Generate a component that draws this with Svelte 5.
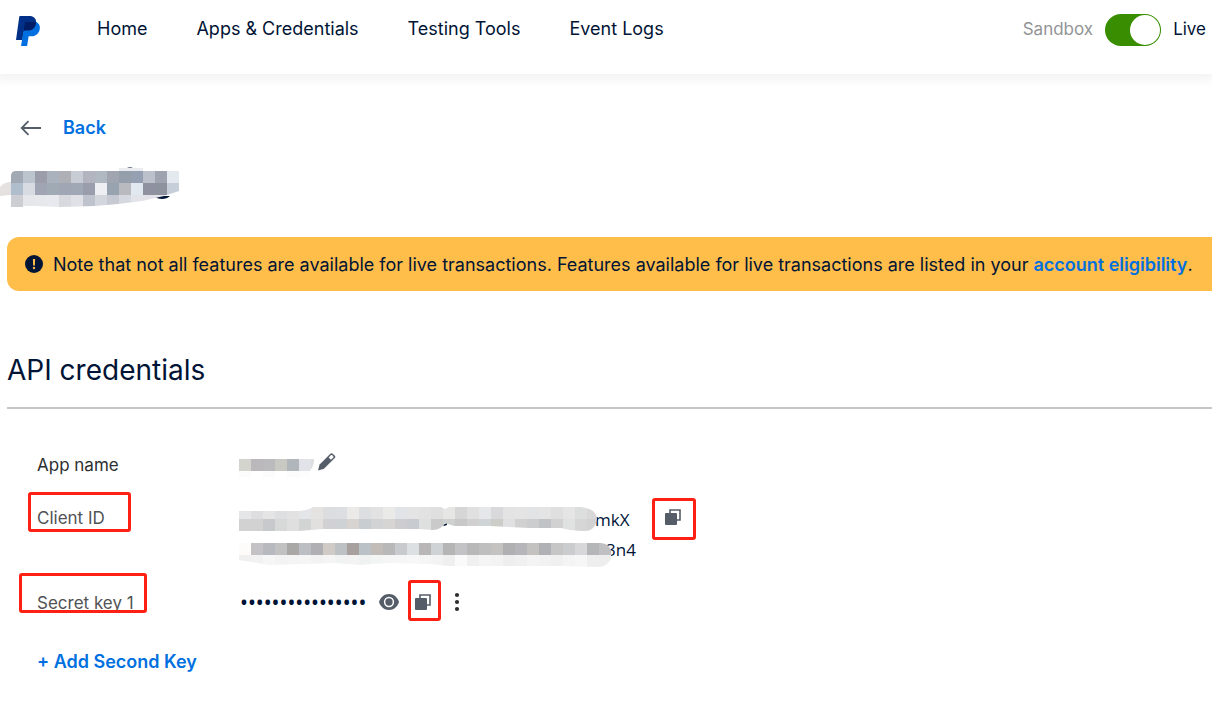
<script>
  let live = $state(true);

  const nav = ['Home', 'Apps & Credentials', 'Testing Tools', 'Event Logs'];

  const titleRows = [
    '#a1a9b5 #bcc5ce #9b9dab #a9b2bd #aeb0b6 #c8ccd4 #b2b5bf #b0b8c2 #a0a5b0 #959eab #95a1b2 #bcc0ca #9fa3b0 #e3e9ef',
    '#b0bdcc #d8dbe1 #a1a5b3 #a0aab5 #a1a6b4 #9fa8b4 #9a9eac #eeeff2 #98a3b0 #b9babf #e2e8ef #9091a0 #8e929f #c5ced9',
    '#cdced4 #e5e7eb #e7e8ec #e8e9ee #d8d9de #dfe1e6 #bfc3cd #d3d6dd #c6c9d2 #d6d8df #e2e4ea #e2e2e8 #e6e6ea #e3e6ea'
  ];
  const nameRows = [
    '#d3d4ce #bab8bb #bbbabd #c9c9c4 #b1b6bb #e2e3e9 #dcdee0',
    '#fcfcfc #ffffff #fcfcfc #ffffff #fcfcfc #fdfdfd #ffffff'
  ];
  const idRows = [
    '#e5e6e7 #dedddf #e5e5e6 #dedfe0 #e2e2e2 #e3e5e8 #e5e3e2 #dcddde #dddee1 #ebeae9 #dcdee0 #e2e2e2 #eaeae8 #e0e4e8 #e4e4e4 #e2e2e2 #e0dfdf #e6e6e5 #d6d6d7 #e0e0e1 #e6e7e8 #d9d9db #e3e3e4 #e4e4e4 #e2e3e4 #e4e4e5 #dfdfdf #e5e5e5 #dcdddd #d8d8d9',
    '#d2d2d2 #d2d2d2 #c7c9cc #d7d9d8 #dfdfdf #d2d4d4 #e1e0df #d1d0d2 #cfd2d5 #d7d3d1 #c8cdd1 #d2d3d4 #d7d5d3 #cdcdd0 #c8cbcf #dedfdf #cbcaca #cecfcf #c8c8c8 #d0d0d0 #cfd4d6 #ccccc9 #e0e0e2 #d1d1d2 #cccdce #bfc3c5 #d1d1d1 #e0e1e1 #d6d6d6 #d2d2d2'
  ];
  const extraRows = [
    '#fdfcfb #c4c2c5 #b7b9be #c1c1c2 #a9a8a7 #bbbfc3 #b0afb3 #d1cbc7 #bdc1c4 #a7a09f #bac2c7 #c2bcb9 #b8b8b9 #c9cacd #dde0e2 #b9b6b7 #cfd3d5 #b5b5b5 #c3c3c5 #b8b8b8 #bfbfbf #c4c3c2 #b0afb2 #b6b6ba #c3c2c0 #b0b1b4 #c6c6c7 #cacccd #d7d7d9 #b4b6b7 #c0c0c3',
    '#f0f0f0 #f2f2f2 #f6f6f6 #f3f3f3 #f4f4f4 #f5f5f5 #f2f2f2 #f5f5f5 #f1f2f2 #f3f3f3 #f0f2f2 #f3f4f4 #f5f5f5 #f6f6f6 #f7f7f7 #f5f5f5 #f3f3f3 #efefef #fafafa #f0f0f0 #f5f5f5 #f3f3f3 #eeeeee #f0f0f0 #f4f4f4 #f2f2f2 #f0f0f0 #f4f4f4 #f6f6f6 #eeeeee #ededed'
  ];
</script>

{#snippet cells(rows, x, y)}
  {#each rows as row, r}
    {#each row.split(' ') as fill, c}
      <rect x={x + c * 12} y={y + r * 12} width="12" height="12" {fill} />
    {/each}
  {/each}
{/snippet}

{#snippet copyIcon()}
  <svg width="16" height="16" viewBox="0 0 16 16" aria-hidden="true">
    <path d="M5 4V1h10v10h-3" fill="none" stroke="#545d68" stroke-width="1.6" />
    <rect x="0" y="4" width="12" height="12" rx="1" fill="#545d68" />
  </svg>
{/snippet}

<header>
  <a class="logo" href="#home" aria-label="PayPal">
    <svg width="24" height="30" viewBox="0 0 24 30" aria-hidden="true">
      <path fill="#003087" d="M4 0H13.500C17.500 0 20.300 2.500 20.200 6.500C19.800 11.500 16.500 15 12 15H8L6.400 24H0L3.300.600Q3.400 0 4 0Z" />
      <path fill="#0070e0" d="M9 6H20.200C22.500 7.200 24 9 23.900 12C23.600 17 20 20.300 15.500 20.300H12.600L11.200 29.400Q11 30 10.500 30H5Z" />
      <path fill="#001c64" d="M9.500 6H20.200C20 11.200 16.800 14.600 12 14.600H9.500Q8 14.600 7.500 16L8.500 7Q8.700 6 9.500 6Z" />
    </svg>
  </a>
  <nav>
    {#each nav as item}
      <a href="#{item.split(' ')[0].toLowerCase()}">{item}</a>
    {/each}
  </nav>
  <div class="mode">
    <span class="off">Sandbox</span>
    <input id="mode" type="checkbox" role="switch" bind:checked={live} />
    <label for="mode">Live</label>
  </div>
</header>

<main>
  <a class="back" href="#apps">
    <svg width="22" height="16" viewBox="0 0 22 16" fill="none" stroke="#545d68" stroke-width="1.8" aria-hidden="true">
      <path d="M21 8H2M8.500 1.200L1.700 8L8.500 14.800" />
    </svg>
    Back
  </a>

  <svg class="title" width="180" height="42" viewBox="0 0 180 42" aria-hidden="true">
    <defs>
      <clipPath id="title-shape">
        <path d="M11 9Q11 4 16 4H179V24L164 29L142 34L118 37L95 39L60 40L35 39L23 39V40H11Z" />
      </clipPath>
    </defs>
    <path d="M0 29V20Q4 15 11 15V28Z" fill="#e5e1e0" />
    <path d="M119 1H143V5H119Z" fill="#ebecef" />
    <path d="M127 1Q130-1 133 1Z" fill="#66718a" />
    <path d="M157 29H170Q167 32 162 32Q158 32 155 30Z" fill="#001435" />
    <g clip-path="url(#title-shape)">{@render cells(titleRows, 11, 4)}</g>
  </svg>

  <div class="notice" role="note">
    <svg width="18" height="18" viewBox="0 0 18 18" aria-hidden="true">
      <circle cx="9" cy="9" r="9" fill="#001435" />
      <path d="M7.900 4H10.100L9.900 10.500H8.100Z" fill="#ffbd4a" />
      <circle cx="9" cy="13" r="1.200" fill="#ffbd4a" />
    </svg>
    <p>Note that not all features are available for live transactions. Features available for live transactions are listed in your <a href="#eligibility">account eligibility</a>.</p>
  </div>

  <h1>API credentials</h1>

  <dl>
    <div class="row name">
      <dt>App name</dt>
      <dd>
        <svg width="75" height="24" viewBox="0 0 75 24" aria-hidden="true">
          <defs><clipPath id="name-shape"><path d="M0 0H72Q75 3 75 7Q75 12 71 18V24H0Z" /></clipPath></defs>
          <g clip-path="url(#name-shape)">{@render cells(nameRows, 0, 6)}</g>
        </svg>
        <button aria-label="Edit app name">
          <svg width="18" height="18" viewBox="0 0 18 18" aria-hidden="true">
            <path fill="#545d68" d="M0 17.500L1.600 11.400L12.400.700Q13.600-.300 14.800.700L16.800 2.700Q17.800 3.900 16.800 5L6 15.800Z" />
            <path fill="#fff" d="M10.700 4.500L13.100 2.100Q13.600 1.700 14.100 2.100L15.400 3.400Q15.800 3.900 15.400 4.400L13 6.800Z" />
          </svg>
        </button>
      </dd>
    </div>

    <div class="row client">
      <dt><span class="marked">Client ID<i class="mark client-mark"></i></span></dt>
      <dd>
        <div class="value">
          <div class="line">
            <svg width="358" height="30" viewBox="0 0 358 30" aria-hidden="true">
              <defs>
                <clipPath id="id-shape">
                  <path d="M0 6H60Q68 6 74 2H202L206 4L210 2H342Q358 4 358 14Q356 26 346 26Q332 26 322 23L290 23L250 21L215 21L206 18Q202 25 194 25L180 24H84L60 26H0Z" />
                </clipPath>
              </defs>
              <path d="M204 20L208 18V20L205 21Z" fill="#001435" />
              <g clip-path="url(#id-shape)">{@render cells(idRows, 0, 2)}</g>
            </svg>
            <span>mkX</span>
          </div>
          <div class="line second">
            <svg width="372" height="30" viewBox="0 0 372 30" aria-hidden="true">
              <defs>
                <clipPath id="extra-shape">
                  <path d="M0 8H362Q372 9 373 19Q371 32 358 32L320 31H210L190 29L150 28L120 30L96 28L30 30L0 25Z" />
                </clipPath>
              </defs>
              <g clip-path="url(#extra-shape)">{@render cells(extraRows, 0, 8)}</g>
            </svg>
            <span>3n4</span>
          </div>
        </div>
        <button class="marked" aria-label="Copy client ID">{@render copyIcon()}<i class="mark copy-mark"></i></button>
      </dd>
    </div>

    <div class="row secret">
      <dt><span class="marked">Secret key 1<i class="mark secret-mark"></i></span></dt>
      <dd>
        <span class="dots">••••••••••••••••</span>
        <button aria-label="Show secret key">
          <svg width="20" height="16" viewBox="0 0 20 16" aria-hidden="true">
            <path fill="#545d68" d="M10 0C15 0 18.500 3.500 20 8C18.500 12.500 15 16 10 16S1.500 12.500 0 8C1.500 3.500 5 0 10 0Z" />
            <circle cx="10" cy="8" r="4.400" fill="#545d68" stroke="#fff" stroke-width="1.500" />
          </svg>
        </button>
        <button class="marked" aria-label="Copy secret key">{@render copyIcon()}<i class="mark key-mark"></i></button>
        <button class="more" aria-label="More options">
          <svg width="6" height="20" viewBox="0 0 6 20" fill="#2c2e2f" aria-hidden="true">
            <circle cx="3" cy="3" r="2.100" /><circle cx="3" cy="10" r="2.100" /><circle cx="3" cy="17" r="2.100" />
          </svg>
        </button>
      </dd>
    </div>
  </dl>

  <button class="add">+ Add Second Key</button>
</main>

<style>
  :global(body) {
    margin: 0;
    background: #fff;
    overflow-x: hidden;
    font-family: Inter, 'Liberation Sans', sans-serif;
    font-size: 17px;
    line-height: 24px;
    color: #001435;
  }
  a {
    color: inherit;
    text-decoration: none;
  }
  svg {
    display: block;
    flex: none;
  }
  button {
    display: flex;
    padding: 0;
    border: 0;
    background: none;
    font: inherit;
    cursor: pointer;
  }
  header {
    display: flex;
    align-items: flex-start;
    box-sizing: border-box;
    height: 74px;
    padding: 14px 6px 0 16px;
    box-shadow: 0 2px 10px 4px rgba(0, 0, 0, 0.05);
  }
  .logo {
    padding-top: 2px;
    margin-right: 57px;
  }
  nav {
    display: flex;
    flex: 1;
    gap: 49px;
    font-size: 18px;
    line-height: 30px;
    white-space: nowrap;
  }
  .mode {
    display: flex;
    gap: 12px;
    line-height: 30px;
  }
  .off {
    color: #929496;
  }
  .mode input {
    appearance: none;
    display: flex;
    width: 56px;
    height: 32px;
    margin: 0;
    padding: 1px;
    box-sizing: border-box;
    border-radius: 16px;
    background: #929496;
    cursor: pointer;
  }
  .mode input::before {
    content: '';
    width: 30px;
    height: 30px;
    border-radius: 50%;
    background: #fff;
  }
  .mode input:checked {
    justify-content: flex-end;
    background: #388e00;
  }
  main {
    padding: 42px 0 24px 7px;
  }
  .back {
    display: flex;
    align-items: center;
    gap: 21px;
    width: max-content;
    padding-left: 13px;
    font-size: 18px;
    font-weight: 600;
    color: #0070e0;
  }
  .title {
    margin: 27px 0 28px -7px;
  }
  .notice {
    display: flex;
    align-items: center;
    gap: 10px;
    padding: 14px 18px;
    border-radius: 12px 0 0 12px;
    background: #ffbd4a;
    font-size: 18px;
    white-space: nowrap;
  }
  p {
    margin: 0;
    padding-top: 2px;
  }
  .notice a {
    font-weight: 600;
    color: #0070e0;
  }
  h1 {
    margin: 61px 0 0;
    padding-bottom: 19px;
    border-bottom: 2px solid #c6c6c6;
    font-size: 28px;
    line-height: 36px;
    font-weight: 400;
  }
  dl {
    margin: 44px 0 0;
    padding-left: 30px;
  }
  .row {
    display: grid;
    grid-template-columns: 202px 1fr;
  }
  dt {
    color: #515354;
  }
  dd {
    display: flex;
    margin: 0;
  }
  .name {
    margin-bottom: 28px;
  }
  .name dt {
    color: #2c2e2f;
  }
  .name dd {
    gap: 4px;
  }
  .client {
    margin-bottom: 26px;
  }
  .client dt {
    line-height: 26px;
  }
  .client dd {
    gap: 29px;
  }
  .client button {
    align-self: flex-start;
    margin-top: 4px;
  }
  .value {
    font-family: 'Open Sans', 'Noto Sans', sans-serif;
    line-height: 30px;
  }
  .line {
    display: flex;
  }
  .line svg {
    position: relative;
    z-index: 1;
    margin-right: -2px;
    overflow: visible;
  }
  .second svg {
    margin-right: -5px;
  }
  .secret dd {
    align-items: center;
    gap: 16px;
    height: 22px;
  }
  .dots {
    width: 123px;
    padding-left: 1px;
    font-family: 'Noto Sans', sans-serif;
    font-size: 21px;
  }
  .more {
    justify-content: center;
    width: 20px;
  }
  .add {
    margin: 35px 0 0 30px;
    font-size: 18px;
    font-weight: 600;
    color: #0070e0;
  }
  .marked {
    display: inline-block;
    position: relative;
  }
  .mark {
    position: absolute;
    box-sizing: border-box;
    border: 3px solid #ff2014;
    border-radius: 3px;
  }
  .client-mark {
    inset: -13px -26px -1px -9px;
  }
  .secret-mark {
    inset: -18px -13px 2px -18px;
  }
  .copy-mark {
    inset: -11px -15px -15px -13px;
  }
  .key-mark {
    inset: -14px -10px -11px -7px;
  }
</style>
